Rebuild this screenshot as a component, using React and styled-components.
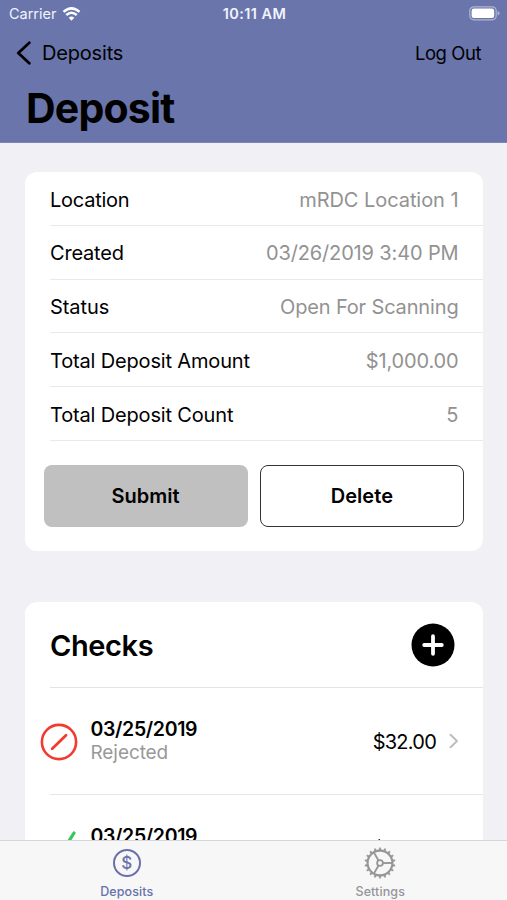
import React from "react";
import styled, { createGlobalStyle } from "styled-components";

const GlobalStyle = createGlobalStyle`
  * { box-sizing: border-box; }
  body { margin: 0; background: #f0f0f5; }
  button { font: inherit; color: inherit; border: 0; padding: 0; background: none; }
  h1, h2, dl, dt, dd, ul { margin: 0; padding: 0; }
`;

const Screen = styled.div`
  width: 507px;
  height: 900px;
  display: flex;
  flex-direction: column;
  overflow: hidden;
  background: #f0f0f5;
  color: #000;
  font-family: Inter, "Liberation Sans", sans-serif;
  font-size: 20px;
  white-space: nowrap;
`;

const Header = styled.header`
  height: 143px;
  flex: none;
  background: #6975ab;
  border-bottom: 1px solid #7e86b3;
`;

const StatusBar = styled.div`
  height: 28px;
  display: grid;
  grid-template-columns: 1fr auto 1fr;
  align-items: center;
  padding: 0 7px 0 9px;
  color: #f1f3fc;
  font-size: 14.5px;
  line-height: 28px;
`;

const Carrier = styled.div`
  display: flex;
  align-items: center;
  gap: 6px;
  letter-spacing: -0.02px;
`;

const Clock = styled.div`
  font-size: 14.5px;
  font-weight: 600;
  letter-spacing: 0.42px;
`;

const Battery = styled.svg`
  justify-self: end;
  margin-top: -2px;
`;

const NavBar = styled.nav`
  height: 49px;
  display: flex;
  align-items: center;
  justify-content: space-between;
  padding: 0 26px 0 16px;
`;

const BackButton = styled.button`
  display: flex;
  align-items: center;
  gap: 10px;
  letter-spacing: -0.18px;
`;

const LogOut = styled.button`
  font-size: 18.5px;
  letter-spacing: -0.45px;
`;

const Title = styled.h1`
  padding: 6px 26px 0;
  font-size: 41px;
  line-height: 50px;
  font-weight: 700;
  letter-spacing: -0.8px;
`;

const Content = styled.main`
  flex: 1;
  min-height: 0;
  overflow: hidden;
  display: flex;
  flex-direction: column;
  gap: 51px;
  padding: 29px 25px 0;
`;

const Card = styled.section`
  flex: none;
  width: 457.5px;
  background: #fff;
  border-radius: 12px;
`;

const Details = styled.dl`
  padding-left: 25px;
`;

const DetailRow = styled.div`
  height: 53.8px;
  display: flex;
  align-items: center;
  justify-content: space-between;
  padding: 2.4px 24px 0 0;
  border-bottom: 1px solid #e9e9eb;
`;

const Label = styled.dt`
  letter-spacing: ${(p) => p.$tracking}px;
`;

const Value = styled.dd`
  color: #929292;
  letter-spacing: ${(p) => p.$tracking}px;
`;

const Actions = styled.div`
  display: grid;
  grid-template-columns: 1fr 1fr;
  gap: 12px;
  padding: 24px 18.5px 24px;
`;

const ActionButton = styled.button`
  height: 62px;
  border-radius: 8px;
  background: ${(p) => (p.$filled ? "#c0c0c0" : "#fff")};
  border: ${(p) => (p.$filled ? "0" : "1.5px solid #333")};
  font-weight: 600;
  letter-spacing: ${(p) => p.$tracking}px;
`;

const ChecksHeader = styled.div`
  height: 86px;
  margin-left: 25px;
  padding: 2px 27.5px 0 0;
  display: flex;
  align-items: center;
  justify-content: space-between;
  border-bottom: 1px solid #e4e4e6;
`;

const SectionTitle = styled.h2`
  font-size: 29px;
  font-weight: 600;
  letter-spacing: -0.4px;
`;

const AddButton = styled.button`
  display: flex;
`;

const CheckList = styled.ul`
  list-style: none;
`;

const CheckRow = styled.li`
  height: 107px;
  display: flex;
  align-items: center;
  gap: 12.5px;
  padding: 0 24px 0 15px;
  background: linear-gradient(#e7e7e9, #e7e7e9) 25px 100% / 100% 1px no-repeat;
`;

const StatusIcon = styled.svg`
  flex: none;
  margin-top: 1px;
`;

const CheckText = styled.div`
  flex: 1;
  line-height: 24px;
`;

const CheckDate = styled.div`
  font-size: 19.5px;
  font-weight: 600;
  letter-spacing: -0.35px;
`;

const CheckState = styled.div`
  font-size: 19px;
  color: #999;
  letter-spacing: -0.08px;
`;

const Amount = styled.div`
  padding-top: 1px;
  letter-spacing: -0.75px;
`;

const TabBar = styled.nav`
  height: 60px;
  flex: none;
  display: grid;
  grid-template-columns: 1fr 1fr;
  background: #f7f7f8;
  border-top: 1px solid #d7d7da;
`;

const Tab = styled.button`
  display: flex;
  flex-direction: column;
  align-items: center;
  gap: 4px;
  padding-top: 6px;
  color: ${(p) => (p.$active ? "#6871aa" : "#969698")};
  font-size: 12.5px;
  font-weight: 500;
  line-height: 17px;
  letter-spacing: 0.1px;
`;

const Coin = styled.span`
  width: 28px;
  height: 28px;
  margin: 2px;
  display: flex;
  align-items: center;
  justify-content: center;
  border: 2px solid currentColor;
  border-radius: 50%;
  font-size: 17px;
  line-height: 24px;
  letter-spacing: 0;
`;

function Wifi() {
  return (
    <svg width="19" height="14" viewBox="0 0 18 14" fill="none" stroke="#fff">
      <path d="M1 4.9Q9 -2.2 17 4.9" strokeWidth="2.5" />
      <path d="M3.8 8Q9 3.3 14.2 8" strokeWidth="2.4" />
      <path d="M9 13.7L6.2 10.8Q9 8.4 11.8 10.8Z" fill="#fff" stroke="none" />
    </svg>
  );
}

function BatteryIcon() {
  return (
    <Battery width="31" height="15" viewBox="0 0 31 15">
      <rect x="0.8" y="0.8" width="26.4" height="13" rx="4" fill="none" stroke="#aeb5d5" strokeWidth="1.2" />
      <rect x="2.6" y="2.6" width="22.6" height="9.4" rx="2.3" fill="#fff" />
      <path d="M28.6 5Q30.6 6 30.6 7.3T28.6 9.6Z" fill="#aeb5d5" />
    </Battery>
  );
}

function RejectedIcon() {
  return (
    <StatusIcon width="38" height="38" viewBox="0 0 38 38" fill="none" stroke="#f4392f" strokeLinecap="round">
      <circle cx="19" cy="19" r="17.1" strokeWidth="2.6" />
      <path d="M12.2 25.8L26 12.3" strokeWidth="2.8" />
    </StatusIcon>
  );
}

function AcceptedIcon() {
  return (
    <StatusIcon width="38" height="38" viewBox="0 0 38 38" fill="none" stroke="#35c759" strokeWidth="3.2" strokeLinecap="round" strokeLinejoin="round">
      <path d="M5 22L14.5 34L34 3" />
    </StatusIcon>
  );
}

function Disclosure() {
  return (
    <svg width="10" height="16" viewBox="0 0 10 16" fill="none" stroke="#bebec0" strokeWidth="2" strokeLinecap="round" strokeLinejoin="round">
      <path d="M1.5 1.8L8 8L1.5 14.2" />
    </svg>
  );
}

function GearIcon() {
  const teeth = Array.from({ length: 18 }, (_, i) => i * 20);
  return (
    <svg width="32" height="32" viewBox="0 0 32 32" fill="none" stroke="currentColor">
      <circle cx="16" cy="16" r="12.4" strokeWidth="2.1" />
      <circle cx="16" cy="16" r="2.9" strokeWidth="1.8" />
      {teeth.map((angle) => (
        <path key={angle} d="M14.9 3.2L15.4 0.8H16.6L17.1 3.2Z" fill="currentColor" strokeWidth="0.4" transform={`rotate(${angle} 16 16)`} />
      ))}
      {[0, 120, 240].map((angle) => (
        <path key={angle} d="M19 16H28" strokeWidth="1.9" transform={`rotate(${angle} 16 16)`} />
      ))}
    </svg>
  );
}

const details = [
  { label: "Location", value: "mRDC Location 1", lt: -0.25, vt: -0.06 },
  { label: "Created", value: "03/26/2019 3:40 PM", lt: -0.2, vt: -0.14 },
  { label: "Status", value: "Open For Scanning", lt: -0.05, vt: -0.15 },
  { label: "Total Deposit Amount", value: "$1,000.00", lt: -0.16, vt: -0.14 },
  { label: "Total Deposit Count", value: "5", lt: -0.16, vt: 0 },
];

const checks = [
  { date: "03/25/2019", state: "Rejected", amount: "$32.00", Icon: RejectedIcon },
  { date: "03/25/2019", state: "Accepted", amount: "$32.00", Icon: AcceptedIcon },
];

export default function App() {
  return (
    <Screen>
      <GlobalStyle />
      <Header>
        <StatusBar>
          <Carrier>
            Carrier
            <Wifi />
          </Carrier>
          <Clock>10:11 AM</Clock>
          <BatteryIcon />
        </StatusBar>
        <NavBar>
          <BackButton>
            <svg width="16" height="24" viewBox="0 0 16 24" fill="none" stroke="#000" strokeWidth="2.8" strokeLinecap="round" strokeLinejoin="round">
              <path d="M13.3 1.8L2.3 12L13.3 22.2" />
            </svg>
            Deposits
          </BackButton>
          <LogOut>Log Out</LogOut>
        </NavBar>
        <Title>Deposit</Title>
      </Header>
      <Content>
        <Card>
          <Details>
            {details.map((d) => (
              <DetailRow key={d.label}>
                <Label $tracking={d.lt}>{d.label}</Label>
                <Value $tracking={d.vt}>{d.value}</Value>
              </DetailRow>
            ))}
          </Details>
          <Actions>
            <ActionButton $filled $tracking={0}>Submit</ActionButton>
            <ActionButton $tracking={0.05}>Delete</ActionButton>
          </Actions>
        </Card>
        <Card>
          <ChecksHeader>
            <SectionTitle>Checks</SectionTitle>
            <AddButton aria-label="Add check">
              <svg width="44" height="44" viewBox="0 0 44 44">
                <circle cx="22" cy="22" r="21.5" />
                <path d="M22 13.2V30.8M13.2 22H30.8" stroke="#fff" strokeWidth="3.8" strokeLinecap="round" />
              </svg>
            </AddButton>
          </ChecksHeader>
          <CheckList>
            {checks.map(({ date, state, amount, Icon }) => (
              <CheckRow key={state}>
                <Icon />
                <CheckText>
                  <CheckDate>{date}</CheckDate>
                  <CheckState>{state}</CheckState>
                </CheckText>
                <Amount>{amount}</Amount>
                <Disclosure />
              </CheckRow>
            ))}
          </CheckList>
        </Card>
      </Content>
      <TabBar>
        <Tab $active>
          <Coin>$</Coin>
          Deposits
        </Tab>
        <Tab>
          <GearIcon />
          Settings
        </Tab>
      </TabBar>
    </Screen>
  );
}
